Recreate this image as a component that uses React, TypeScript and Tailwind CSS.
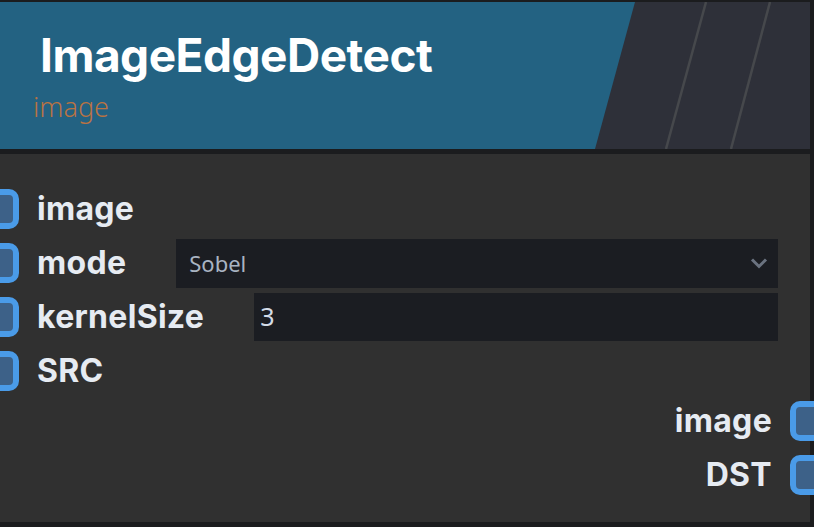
import React from 'react';

const Handle = ({ side }: { side: 'left' | 'right' }) => (
  <div
    className={`absolute top-1/2 -translate-y-1/2 w-[40px] h-[40px] rounded-[10px] border-[6px] border-[#4a9be8] bg-[#3d6188] ${
      side === 'left' ? 'left-[-21px]' : 'right-[-20px]'
    }`}
  />
);

const inputs = [
  { name: 'image' },
  { name: 'mode', select: 'Sobel' },
  { name: 'kernelSize', value: '3' },
  { name: 'SRC' },
];

const outputs = ['image', 'DST'];

const HeaderArt = () => (
  <svg className="absolute inset-0 h-full w-full" viewBox="0 0 810 147" preserveAspectRatio="none">
    <polygon points="635,0 810,0 810,147 595,147" fill="#2e3039" />
    <line x1="706" y1="0" x2="666" y2="147" stroke="#46484c" strokeWidth="2.5" />
    <line x1="770" y1="0" x2="731" y2="147" stroke="#46484c" strokeWidth="2.5" />
  </svg>
);

export default function App() {
  return (
    <div className="w-[814px] h-[527px] overflow-hidden bg-[#1b1b1b]" style={{ fontFamily: 'Inter, "Noto Sans", sans-serif' }}>
      <div className="relative w-[814px] h-[527px] border-t-[2px] border-r-[4px] border-b-[5px] border-[#1b1c1e] bg-[#303030] flex flex-col">
        <div className="relative h-[147px] shrink-0 bg-[#236282] overflow-hidden">
          <HeaderArt />
          <div className="relative pl-[40px] pt-[24px]">
            <div className="text-[46px] leading-[58px] font-bold text-white tracking-[-0.5px]">ImageEdgeDetect</div>
            <div className="ml-[-7px] mt-[7px] text-[27px] leading-[32px] font-light text-[#b87344]" style={{ fontFamily: '"Noto Sans", sans-serif' }}>
              image
            </div>
          </div>
        </div>
        <div className="h-[5px] shrink-0 bg-[#1b1c1e]" />
        <div className="flex flex-col pt-[28px]">
          {inputs.map((row) => (
            <div key={row.name} className="relative h-[54px] flex items-center pl-[37px] pr-[32px] gap-[50px]">
              <Handle side="left" />
              <span className="text-[32px] font-bold text-[#e6ebf2] leading-none tracking-[0.3px]">{row.name}</span>
              {row.select && (
                <div className="flex-1 h-[49px] bg-[#1b1d22] flex items-center justify-between pl-[13px] pr-[10px]">
                  <span className="text-[22px] text-[#a9b4c2]" style={{ fontFamily: '"Noto Sans", sans-serif' }}>{row.select}</span>
                  <svg width="18" height="12" viewBox="0 0 18 12" fill="none">
                    <path d="M2 2.5 L9 9.5 L16 2.5" stroke="#6b7380" strokeWidth="3" />
                  </svg>
                </div>
              )}
              {row.value && (
                <div className="flex-1 h-[48px] bg-[#1b1d22] flex items-center pl-[6px]">
                  <span className="text-[25px] text-[#d3dbe7]" style={{ fontFamily: '"Noto Sans", sans-serif' }}>{row.value}</span>
                </div>
              )}
            </div>
          ))}
          <div className="flex flex-col mt-[-4px]">
            {outputs.map((name) => (
              <div key={name} className="relative h-[54px] flex items-center justify-end pr-[38px]">
                <span className="text-[32px] font-bold text-[#e6ebf2] leading-none tracking-[0.3px]">{name}</span>
                <Handle side="right" />
              </div>
            ))}
          </div>
        </div>
      </div>
    </div>
  );
}
